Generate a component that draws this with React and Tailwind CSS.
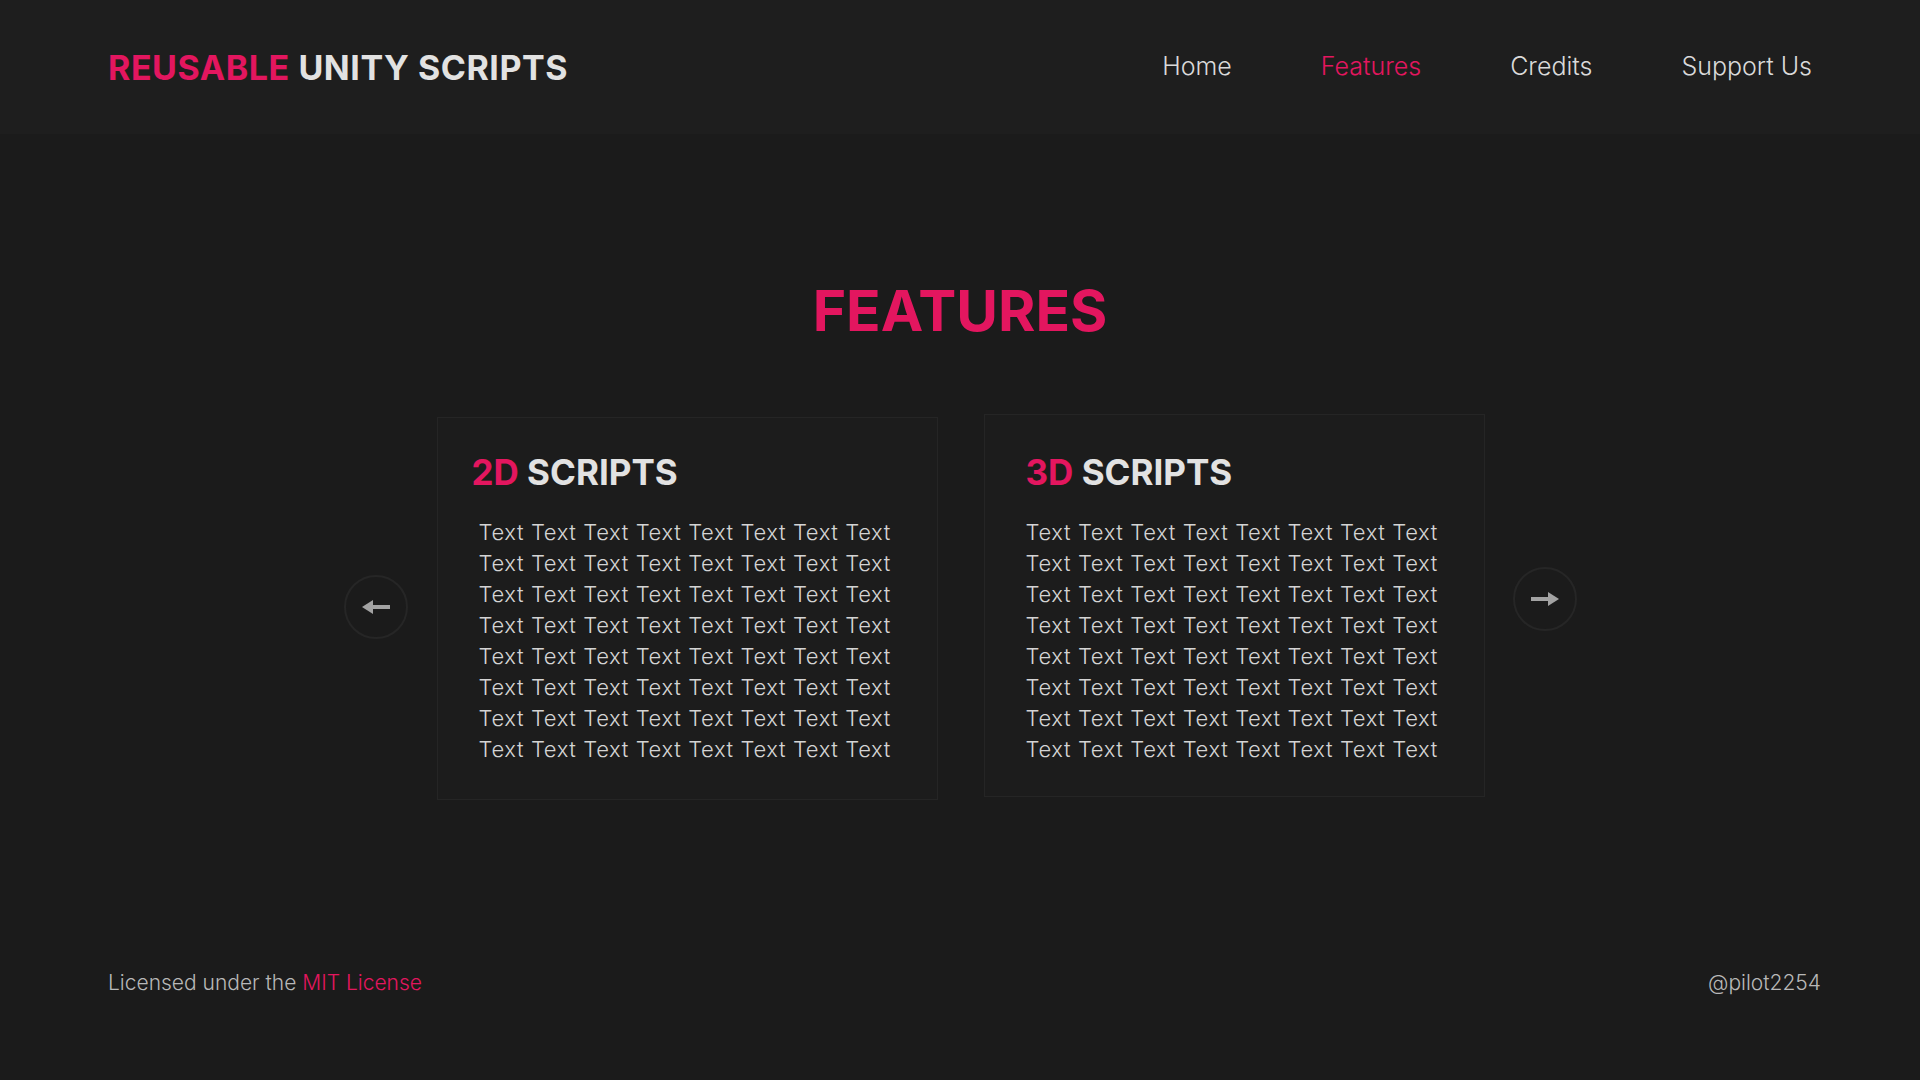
import React from "react";

const NAV = [
  { label: "Home", active: false },
  { label: "Features", active: true },
  { label: "Credits", active: false },
  { label: "Support Us", active: false },
];

const LINES = Array.from({ length: 8 }, () => "Text Text Text Text Text Text Text Text");

function Arrow({ dir }) {
  return (
    <svg width="28" height="16" viewBox="0 0 28 16" className={dir === "right" ? "rotate-180" : ""}>
      <polygon points="0,8 11,1 11,15" fill="#a3a3a3" />
      <rect x="10" y="6" width="18" height="4" fill="#a3a3a3" />
    </svg>
  );
}

function Card({ prefix, className = "", headClass = "" }) {
  return (
    <div className={`w-[501px] border border-[#252525] bg-[#1c1c1c] px-[41px] ${className}`}>
      <h2 className={`text-[35px] font-bold leading-[41px] text-[#e2e2e2] ${headClass}`}>
        <span className="text-[#e3165f]">{prefix}</span> SCRIPTS
      </h2>
      <div className="mt-[24px] text-[22px] font-light leading-[31px] tracking-[0.62px] text-[#d4d4d4]">
        {LINES.map((l, i) => (
          <p key={i} className="whitespace-nowrap">{l}</p>
        ))}
      </div>
    </div>
  );
}

export default function App() {
  return (
    <div className="flex min-h-screen flex-col bg-[#1b1b1b] font-['Inter','Liberation_Sans',sans-serif]">
      <header className="flex h-[134px] items-center justify-between bg-[#1e1e1e] px-[108px]">
        <h1 className="text-[34px] font-bold tracking-[0.55px] text-[#e2e2e2]">
          <span className="text-[#e3165f]">REUSABLE</span> UNITY SCRIPTS
        </h1>
        <nav className="flex items-center gap-[89px] text-[25px] font-light">
          {NAV.map((n) => (
            <a key={n.label} className={n.active ? "text-[#e3165f]" : "text-[#dadada]"}>
              {n.label}
            </a>
          ))}
        </nav>
      </header>

      <main className="flex flex-col items-center pt-[148px]">
        <h2 className="text-[57px] font-bold leading-none text-[#e3165f]">FEATURES</h2>
        <div className="mt-[75px] flex items-start">
          <button className="mt-[161px] mr-[29px] flex h-[64px] w-[64px] items-center justify-center rounded-full border-2 border-[#262626]">
            <Arrow dir="left" />
          </button>
          <Card prefix="2D" className="mt-[3px] py-[34px]" headClass="-ml-[7px]" />
          <Card prefix="3D" className="ml-[46px] pt-[37px] pb-[31px]" />
          <button className="mt-[153px] ml-[28px] flex h-[64px] w-[64px] items-center justify-center rounded-full border-2 border-[#262626]">
            <Arrow dir="right" />
          </button>
        </div>
      </main>

      <footer className="mt-auto flex items-center justify-between px-[108px] pb-[83px] text-[21px] font-light leading-[28px] text-[#b8b8b8]">
        <p>
          Licensed under the <a className="text-[#e3165f]">MIT License</a>
        </p>
        <p className="mr-[-9px]">@pilot2254</p>
      </footer>
    </div>
  );
}
